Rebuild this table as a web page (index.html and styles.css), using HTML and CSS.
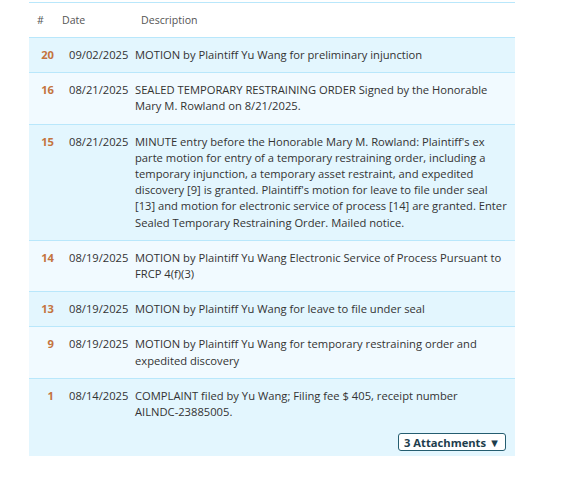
FILE: index.html
```html
<!DOCTYPE html>
<html lang="en">
<head>
<meta charset="utf-8">
<title>Docket</title>
<link rel="stylesheet" href="styles.css">
</head>
<body>
<div class="docket">
  <div class="head">
    <div class="h-num">#</div>
    <div class="h-date">Date</div>
    <div class="h-desc">Description</div>
  </div>
  <div class="row alt">
    <div class="num">20</div>
    <div class="date">09/02/2025</div>
    <div class="desc">MOTION by Plaintiff Yu Wang for preliminary injunction</div>
  </div>
  <div class="row">
    <div class="num">16</div>
    <div class="date">08/21/2025</div>
    <div class="desc">SEALED TEMPORARY RESTRAINING ORDER Signed by the Honorable Mary M. Rowland on 8/21/2025.</div>
  </div>
  <div class="row alt">
    <div class="num">15</div>
    <div class="date">08/21/2025</div>
    <div class="desc">MINUTE entry before the Honorable Mary M. Rowland: Plaintiff's ex parte motion for entry of a temporary restraining order, including a temporary injunction, a temporary asset restraint, and expedited discovery [9] is granted. Plaintiff's motion for leave to file under seal [13] and motion for electronic service of process [14] are granted. Enter Sealed Temporary Restraining Order. Mailed notice.</div>
  </div>
  <div class="row">
    <div class="num">14</div>
    <div class="date">08/19/2025</div>
    <div class="desc">MOTION by Plaintiff Yu Wang Electronic Service of Process Pursuant to FRCP 4(f)(3)</div>
  </div>
  <div class="row alt">
    <div class="num">13</div>
    <div class="date">08/19/2025</div>
    <div class="desc">MOTION by Plaintiff Yu Wang for leave to file under seal</div>
  </div>
  <div class="row">
    <div class="num">9</div>
    <div class="date">08/19/2025</div>
    <div class="desc">MOTION by Plaintiff Yu Wang for temporary restraining order and expedited discovery</div>
  </div>
  <div class="row alt last">
    <div class="num">1</div>
    <div class="date">08/14/2025</div>
    <div class="desc">COMPLAINT filed by Yu Wang; Filing fee $ 405, receipt number <span class="nowrap">AILNDC-23885005.</span>
      <div class="attach-wrap"><button class="attach">3 Attachments ▼</button></div>
    </div>
  </div>
</div>
</body>
</html>
```
FILE: styles.css
```css
html, body {
  margin: 0;
  padding: 0;
  background: #ffffff;
}
body {
  font-family: "Open Sans", "Noto Sans", sans-serif;
  font-size: 11.2px;
  color: #333333;
}
.docket {
  width: 486px;
  margin: 2px 0 0 29px;
  border-top: 1px solid #b9e7fb;
}
.head {
  display: grid;
  grid-template-columns: 33px 79px 1fr;
  height: 34px;
  align-items: center;
  border-bottom: 1px solid #b9e7fb;
  color: #555555;
  font-size: 10.6px;
}
.h-num { padding-left: 8px; }
.row {
  display: grid;
  grid-template-columns: 33px 73px 1fr;
  padding: 9px 0;
  line-height: 16.2px;
  background: #f1faff;
  border-bottom: 1px solid #b9e7fb;
}
.row.alt { background: #e3f6fe; }
.row.last { border-bottom: none; padding-bottom: 5px; }
.num {
  text-align: right;
  padding-right: 8px;
  font-weight: 700;
  color: #c4743e;
}
.date { padding-left: 7px; }
.desc { padding-right: 6px; }
.nowrap { white-space: nowrap; }
.attach-wrap {
  display: flex;
  justify-content: flex-end;
  margin-top: 13px;
  padding-right: 3px;
}
.attach {
  font-family: inherit;
  font-size: 11.2px;
  font-weight: 700;
  color: #1d3d4c;
  background: #ffffff;
  border: 1px solid #245d70;
  border-radius: 3px;
  padding: 0 5px;
  height: 18px;
  line-height: 15px;
  cursor: pointer;
}
```
